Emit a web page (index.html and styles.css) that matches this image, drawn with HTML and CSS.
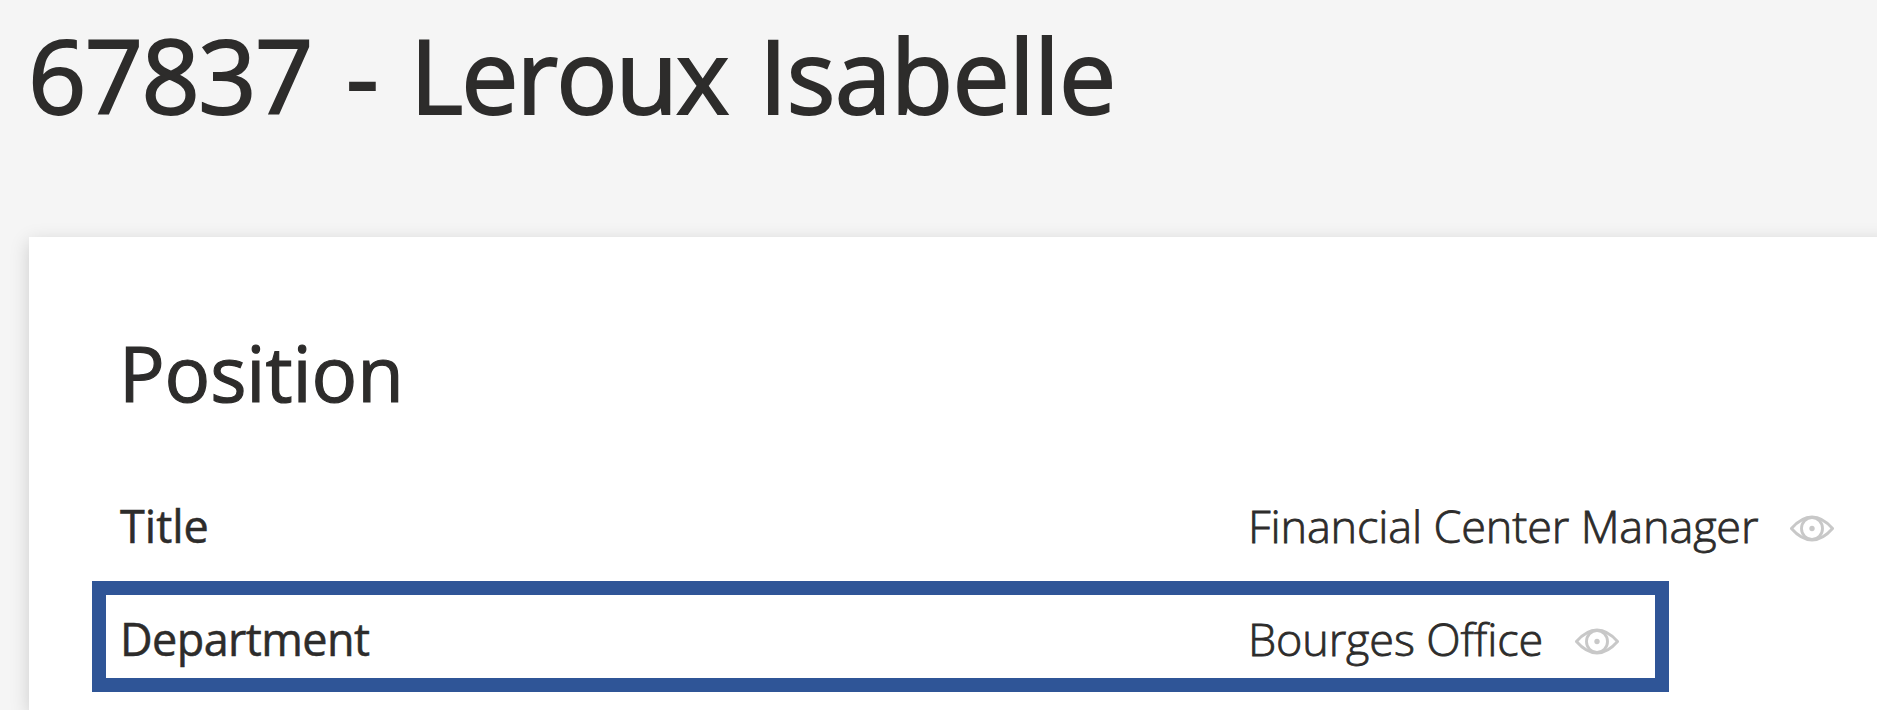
FILE: index.html
```html
<!DOCTYPE html>
<html lang="en">
<head>
<meta charset="utf-8">
<title>67837 - Leroux Isabelle</title>
<link rel="stylesheet" href="styles.css">
</head>
<body>
<h1 class="page-title"><span class="employee-id">67837</span> <span class="dash">-</span> <span class="last-name">Leroux</span> <span class="first-name">Isabelle</span></h1>
<main class="card">
  <h2 class="card-title">Position</h2>
  <div class="row">
    <div class="label label-title">Title</div>
    <div class="value"><span class="value-title">Financial Center Manager</span>
      <svg class="eye" viewBox="0 0 46 28"><path d="M1.500 14Q12 2 23 2T44.500 14Q34 26 23 26T1.500 14Z"/><ellipse cx="23" cy="14" rx="11" ry="11.500"/><circle class="pupil" cx="23" cy="14" r="2.800"/></svg>
    </div>
  </div>
  <div class="row highlighted">
    <div class="label label-dept">Department</div>
    <div class="value"><span class="value-dept">Bourges Office</span>
      <svg class="eye" viewBox="0 0 46 28"><path d="M1.500 14Q12 2 23 2T44.500 14Q34 26 23 26T1.500 14Z"/><ellipse cx="23" cy="14" rx="11" ry="11.500"/><circle class="pupil" cx="23" cy="14" r="2.800"/></svg>
    </div>
  </div>
</main>
</body>
</html>
```
FILE: styles.css
```css
* { box-sizing: border-box; }
body {
  margin: 0;
  height: 710px;
  overflow: hidden;
  background: #f5f5f5;
  color: #2d2c2b;
  font-family: "Open Sans", "Noto Sans", sans-serif;
}
.page-title {
  display: flex;
  height: 237px;
  margin: 0;
  padding-left: 28px;
  font-size: 102px;
  font-weight: 400;
  line-height: 149px;
  white-space: nowrap;
  -webkit-text-stroke: 1.9px #2d2c2b;
}
.employee-id { width: 318px; letter-spacing: -1.6px; }
.dash { width: 64px; }
.last-name { width: 349px; letter-spacing: -2px; }
.first-name { letter-spacing: -.7px; }
.card {
  width: 1900px;
  height: 473px;
  margin-left: 29px;
  padding: 90px 0 0 63px;
  overflow: hidden;
  background: #fff;
  box-shadow: 0 5px 18px rgba(0, 0, 0, .17);
}
.card-title {
  margin: 0;
  padding-left: 27px;
  height: 143px;
  font-size: 76px;
  font-weight: 400;
  line-height: 92px;
  letter-spacing: -.1px;
  white-space: nowrap;
  -webkit-text-stroke: 1.2px #2d2c2b;
}
.row {
  display: flex;
  width: 1785px;
  height: 111px;
  align-items: center;
  padding-left: 28px;
  font-size: 45px;
  line-height: 60px;
  white-space: nowrap;
}
.highlighted {
  width: 1577px;
  padding: 5px 0 0 14px;
  border: 14px solid #2f5597;
}
.label {
  width: 1128px;
  flex: none;
  font-weight: 400;
  -webkit-text-stroke: .5px #2d2c2b;
}
.label-dept { letter-spacing: -.6px; }
.value {
  display: flex;
  align-items: center;
  gap: 32px;
  font-weight: 300;
  letter-spacing: -.15px;
  -webkit-text-stroke: .8px #2d2c2b;
}
.eye {
  width: 44px;
  height: 27px;
  margin-top: 5px;
  fill: none;
  stroke: #c8c8c8;
  stroke-width: 3;
}
.pupil { fill: #c8c8c8; stroke: none; }
```
